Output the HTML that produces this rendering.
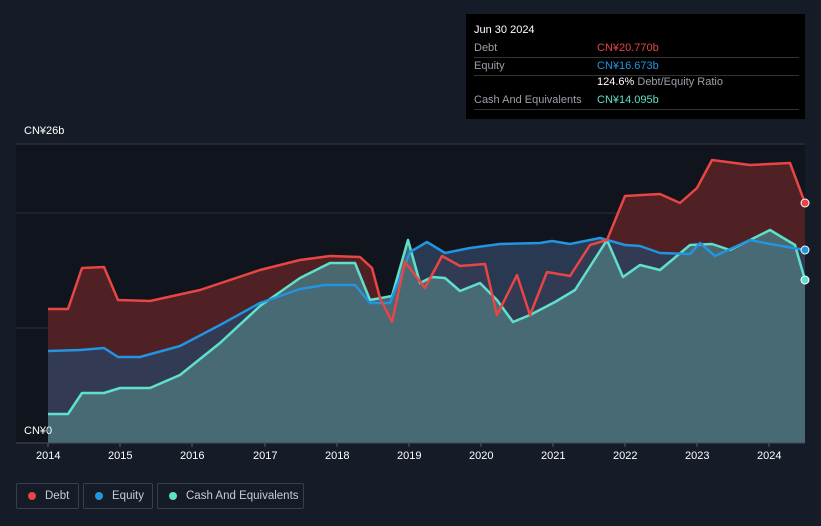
<!DOCTYPE html>
<html><head><style>
html,body{margin:0;width:821px;height:526px;overflow:hidden}
body{background:#161c27;font-family:"Liberation Sans",sans-serif;position:relative}
.tt{position:absolute;left:466px;top:14px;width:339px;height:105px;background:#000;color:#fff;font-size:11px}
.tt .r{position:absolute;left:8px;right:6px;border-bottom:1px solid #333;height:17px;line-height:17px;color:#9aa0a8}
.tt .v{position:absolute;left:123px}
.lg{position:absolute;top:483px;height:26px;border:1px solid #3a404a;border-radius:2px;color:#c8ccd2;font-size:11.5px;line-height:24px;box-sizing:border-box;white-space:nowrap;overflow:hidden}
.lg i{position:absolute;left:11px;top:8px;width:8px;height:8px;border-radius:50%}
.ax{position:absolute;top:450px;color:#fff;font-size:11px}
</style></head><body>
<svg width="821" height="526" style="position:absolute;left:0;top:0">
<rect x="16" y="144" width="789" height="299" fill="#10141c"/>
<line x1="16" y1="144" x2="805" y2="144" stroke="#333a45"/>
<line x1="16" y1="213" x2="805" y2="213" stroke="#2a2f38"/>
<line x1="16" y1="328" x2="805" y2="328" stroke="#2a2f38"/>
<path d="M48,309 L68,309 L82,268 L104,267 L118,300 L150,301 L200,290 L260,270 L300,260 L330,256 L360,257 L372,268 L380,298 L392,322 L405,262 L425,288 L442,256 L460,266 L485,264 L497,315 L517,275 L530,315 L547,272 L570,276 L590,245 L607,240 L625,196 L660,194 L680,203 L697,188 L712,160 L750,165 L790,163 L805,203 L805,443 L48,443Z" fill="#4f2024"/>
<path d="M48,351 L80,350 L104,348 L118,357 L140,357 L180,346 L220,325 L260,303 L300,289 L325,285 L355,285 L370,303 L390,303 L410,252 L427,242 L445,253 L470,248 L500,244 L540,243 L552,241 L570,244 L600,238 L625,245 L640,246 L660,253 L690,254 L700,243 L715,256 L750,240 L770,244 L805,250 L805,443 L48,443Z" fill="#2e3f5c" opacity="0.85"/>
<path d="M48,414 L68,414 L82,393 L104,393 L120,388 L150,388 L180,375 L220,343 L260,306 L300,278 L330,263 L355,263 L370,300 L392,296 L408,240 L420,283 L432,277 L445,278 L460,291 L480,283 L497,300 L513,322 L530,315 L555,302 L575,290 L607,240 L623,277 L640,265 L660,270 L690,245 L712,244 L730,250 L770,230 L795,245 L805,280 L805,443 L48,443Z" fill="#4a7078" opacity="0.9"/>
<g fill="none" stroke-width="2.5" stroke-linejoin="round">
<path d="M48,414 L68,414 L82,393 L104,393 L120,388 L150,388 L180,375 L220,343 L260,306 L300,278 L330,263 L355,263 L370,300 L392,296 L408,240 L420,283 L432,277 L445,278 L460,291 L480,283 L497,300 L513,322 L530,315 L555,302 L575,290 L607,240 L623,277 L640,265 L660,270 L690,245 L712,244 L730,250 L770,230 L795,245 L805,280" stroke="#5fe0cc"/>
<path d="M48,351 L80,350 L104,348 L118,357 L140,357 L180,346 L220,325 L260,303 L300,289 L325,285 L355,285 L370,303 L390,303 L410,252 L427,242 L445,253 L470,248 L500,244 L540,243 L552,241 L570,244 L600,238 L625,245 L640,246 L660,253 L690,254 L700,243 L715,256 L750,240 L770,244 L805,250" stroke="#2394e0"/>
<path d="M48,309 L68,309 L82,268 L104,267 L118,300 L150,301 L200,290 L260,270 L300,260 L330,256 L360,257 L372,268 L380,298 L392,322 L405,262 L425,288 L442,256 L460,266 L485,264 L497,315 L517,275 L530,315 L547,272 L570,276 L590,245 L607,240 L625,196 L660,194 L680,203 L697,188 L712,160 L750,165 L790,163 L805,203" stroke="#e84545"/>
</g>
<circle cx="805" cy="203" r="4" fill="#e84545" stroke="#fff"/>
<circle cx="805" cy="250" r="4" fill="#2394e0" stroke="#fff"/>
<circle cx="805" cy="280" r="4" fill="#5fe0cc" stroke="#fff"/>
<line x1="16" y1="443" x2="805" y2="443" stroke="#454b55"/>
<g stroke="#555b65"><line x1="48" y1="443" x2="48" y2="447"/><line x1="120" y1="443" x2="120" y2="447"/><line x1="192" y1="443" x2="192" y2="447"/><line x1="265" y1="443" x2="265" y2="447"/><line x1="337" y1="443" x2="337" y2="447"/><line x1="409" y1="443" x2="409" y2="447"/><line x1="481" y1="443" x2="481" y2="447"/><line x1="553" y1="443" x2="553" y2="447"/><line x1="625" y1="443" x2="625" y2="447"/><line x1="697" y1="443" x2="697" y2="447"/><line x1="769" y1="443" x2="769" y2="447"/></g>
</svg>
<div style="position:absolute;left:24px;top:125px;color:#fff;font-size:11px">CN¥26b</div>
<div style="position:absolute;left:24px;top:425px;color:#fff;font-size:11px">CN¥0</div>
<div class="ax" style="left:36px">2014</div><div class="ax" style="left:108px">2015</div><div class="ax" style="left:180px">2016</div><div class="ax" style="left:253px">2017</div><div class="ax" style="left:325px">2018</div><div class="ax" style="left:397px">2019</div><div class="ax" style="left:469px">2020</div><div class="ax" style="left:541px">2021</div><div class="ax" style="left:613px">2022</div><div class="ax" style="left:685px">2023</div><div class="ax" style="left:757px">2024</div>
<div class="tt">
<div style="position:absolute;left:8px;top:10px">Jun 30 2024</div>
<div class="r" style="top:26px">Debt<span class="v" style="color:#e84545">CN¥20.770b</span></div>
<div class="r" style="top:44px">Equity<span class="v" style="color:#2394e0">CN¥16.673b</span></div>
<div class="r" style="top:60px;border:none"><span class="v" style="color:#fff">124.6% <span style="color:#9aa0a8">Debt/Equity Ratio</span></span></div>
<div class="r" style="top:78px">Cash And Equivalents<span class="v" style="color:#5fe0cc">CN¥14.095b</span></div>
</div>
<div class="lg" style="left:16px;width:63px"><i style="background:#e84545"></i><span style="margin-left:28px">Debt</span></div>
<div class="lg" style="left:83px;width:70px"><i style="background:#2394e0"></i><span style="margin-left:28px">Equity</span></div>
<div class="lg" style="left:157px;width:147px"><i style="background:#5fe0cc"></i><span style="margin-left:28px">Cash And Equivalents</span></div>
</body></html>
